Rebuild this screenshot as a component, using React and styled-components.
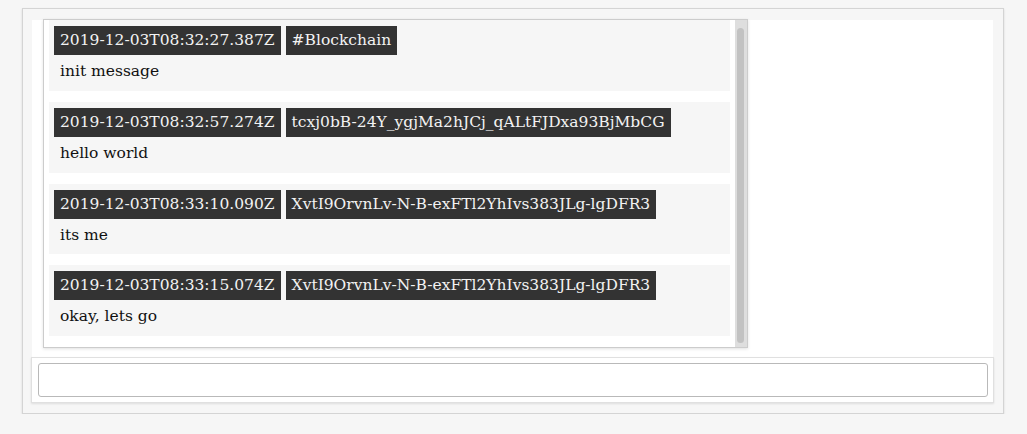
import React, { useLayoutEffect, useRef } from "react";
import styled, { createGlobalStyle } from "styled-components";

const GlobalStyle = createGlobalStyle`
  html, body {
    margin: 0;
    padding: 0;
    background: #f6f6f6;
    font-family: "DejaVu Serif", "Liberation Serif", serif;
  }
`;

const Frame = styled.div`
  box-sizing: border-box;
  width: 982px;
  height: 406px;
  margin: 8px 23px 0 22px;
  padding: 11px 10px 10px 9px;
  background: #f6f6f6;
  border: 1px solid #d4d4d4;
  box-shadow: 0 1px 2px rgba(0, 0, 0, 0.12);
  display: flex;
  flex-direction: column;
`;

const ChatPanel = styled.div`
  background: #ffffff;
  padding: 0 11px 9px;
  height: 337px;
  box-sizing: border-box;
`;

const ScrollBox = styled.div`
  box-sizing: border-box;
  width: 705px;
  height: 329px;
  margin-top: -1px;
  background: #ffffff;
  border: 1px solid #cccccc;
  box-shadow: 0 1px 3px rgba(0, 0, 0, 0.12);
  display: flex;
`;

const MessageList = styled.div`
  flex: 1;
  min-width: 0;
  box-sizing: border-box;
  padding: 11px 5px;
  overflow: hidden;
  display: flex;
  flex-direction: column;
  gap: 11px;
`;

const ScrollTrack = styled.div`
  flex: none;
  width: 12px;
  box-sizing: border-box;
  padding: 8px 3px 4px 2px;
  background: #dedede;
  display: flex;
`;

const ScrollThumb = styled.div`
  flex: 1;
  background: #c2c2c2;
  border-radius: 4px;
`;

const Message = styled.div`
  flex: none;
  background: #f6f6f6;
  padding: 6px 5px 8.75px;
`;

const MetaRow = styled.div`
  display: flex;
  gap: 5px;
`;

const Badge = styled.span`
  background: #333333;
  color: #f2f2f2;
  font-size: 15.5px;
  line-height: 21px;
  padding: 4px 6px;
  white-space: nowrap;
`;

const Body = styled.div`
  margin-top: 5px;
  padding-left: 6px;
  font-size: 15.5px;
  line-height: 22px;
  color: #111111;
`;

const InputCard = styled.div`
  margin: 0 -1px;
  padding: 5px 5px 5px 6px;
  background: #ffffff;
  border: 1px solid #e0e0e0;
  box-shadow: 0 1px 2px rgba(0, 0, 0, 0.1);
`;

const TextInput = styled.input`
  display: block;
  box-sizing: border-box;
  width: 100%;
  height: 34px;
  border: 1px solid #b9b9b9;
  border-radius: 3px;
  background: #ffffff;
  font-family: "DejaVu Serif", serif;
  font-size: 15px;
  padding: 0 8px;
  outline: none;
`;

const messages = [
  { time: "2019-12-03T08:32:27.387Z", from: "#Blockchain", text: "init message" },
  { time: "2019-12-03T08:32:57.274Z", from: "tcxj0bB-24Y_ygjMa2hJCj_qALtFJDxa93BjMbCG", text: "hello world" },
  { time: "2019-12-03T08:33:10.090Z", from: "XvtI9OrvnLv-N-B-exFTl2YhIvs383JLg-lgDFR3", text: "its me" },
  { time: "2019-12-03T08:33:15.074Z", from: "XvtI9OrvnLv-N-B-exFTl2YhIvs383JLg-lgDFR3", text: "okay, lets go" },
];

export default function App() {
  const ref = useRef(null);
  useLayoutEffect(() => {
    if (ref.current) ref.current.scrollTop = ref.current.scrollHeight;
  }, []);
  return (
    <>
      <GlobalStyle />
      <Frame>
        <ChatPanel>
          <ScrollBox>
            <MessageList ref={ref}>
              {messages.map((m, i) => (
                <Message key={i}>
                  <MetaRow>
                    <Badge>{m.time}</Badge>
                    <Badge>{m.from}</Badge>
                  </MetaRow>
                  <Body>{m.text}</Body>
                </Message>
              ))}
            </MessageList>
            <ScrollTrack>
              <ScrollThumb />
            </ScrollTrack>
          </ScrollBox>
        </ChatPanel>
        <InputCard>
          <TextInput type="text" />
        </InputCard>
      </Frame>
    </>
  );
}
